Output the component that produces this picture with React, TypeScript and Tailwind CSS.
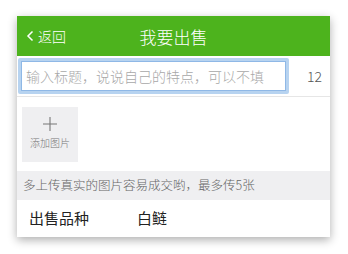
export default function App() {
  return (
    <div
      className="h-[254px] w-[348px] bg-white pl-[17px] pt-[16px]"
      style={{ fontFamily: '"Noto Sans CJK SC", "Noto Sans", sans-serif' }}
    >
      <div className="w-[313px] bg-white shadow-[0_3px_9px_rgba(0,0,0,0.32)]">
        <div className="relative flex h-[40px] items-center bg-[#4db31d] font-light text-white">
          <div className="flex items-center pl-[9px] text-[14px]">
            <svg width="9" height="12" viewBox="0 0 9 12" className="mr-[3px]">
              <path d="M6.5 1.5 L2 6 L6.5 10.5" fill="none" stroke="white" strokeWidth="1.5" />
            </svg>
            返回
          </div>
          <div className="absolute left-0 right-0 text-center text-[17px] leading-none">我要出售</div>
        </div>

        <div className="flex h-[41px] items-center border-b border-[#e6e6e6] font-light">
          <div className="ml-[1px] flex h-[36px] w-[271px] items-center rounded-[2px] border-[3px] border-[#b7d3f0] bg-white pl-[5px] shadow-[inset_0_0_0_1px_#8fb8e6] text-[14px] text-[#a8a8a8]">
            输入标题，说说自己的特点，可以不填
          </div>
          <div className="ml-[18px] text-[14px] text-[#555]">12</div>
        </div>

        <div className="h-[74px] pl-[5px] pt-[10px]">
          <div className="flex h-[55px] w-[56px] flex-col items-center bg-[#efeff1] pt-[10px]">
            <svg width="14" height="14" viewBox="0 0 14 14">
              <path d="M7 0 V14 M0 7 H14" stroke="#777" strokeWidth="1.1" />
            </svg>
            <div className="mt-[7px] text-[10px] font-light leading-none text-[#777]">添加图片</div>
          </div>
        </div>

        <div className="flex h-[29px] items-center bg-[#efeff1] pl-[6px] text-[12.5px] font-light text-[#666]">
          多上传真实的图片容易成交哟，最多传5张
        </div>

        <div className="flex h-[37px] items-center text-[15px] text-[#222]">
          <div className="w-[120px] pl-[12px]">出售品种</div>
          <div>白鲢</div>
        </div>
      </div>
    </div>
  );
}
